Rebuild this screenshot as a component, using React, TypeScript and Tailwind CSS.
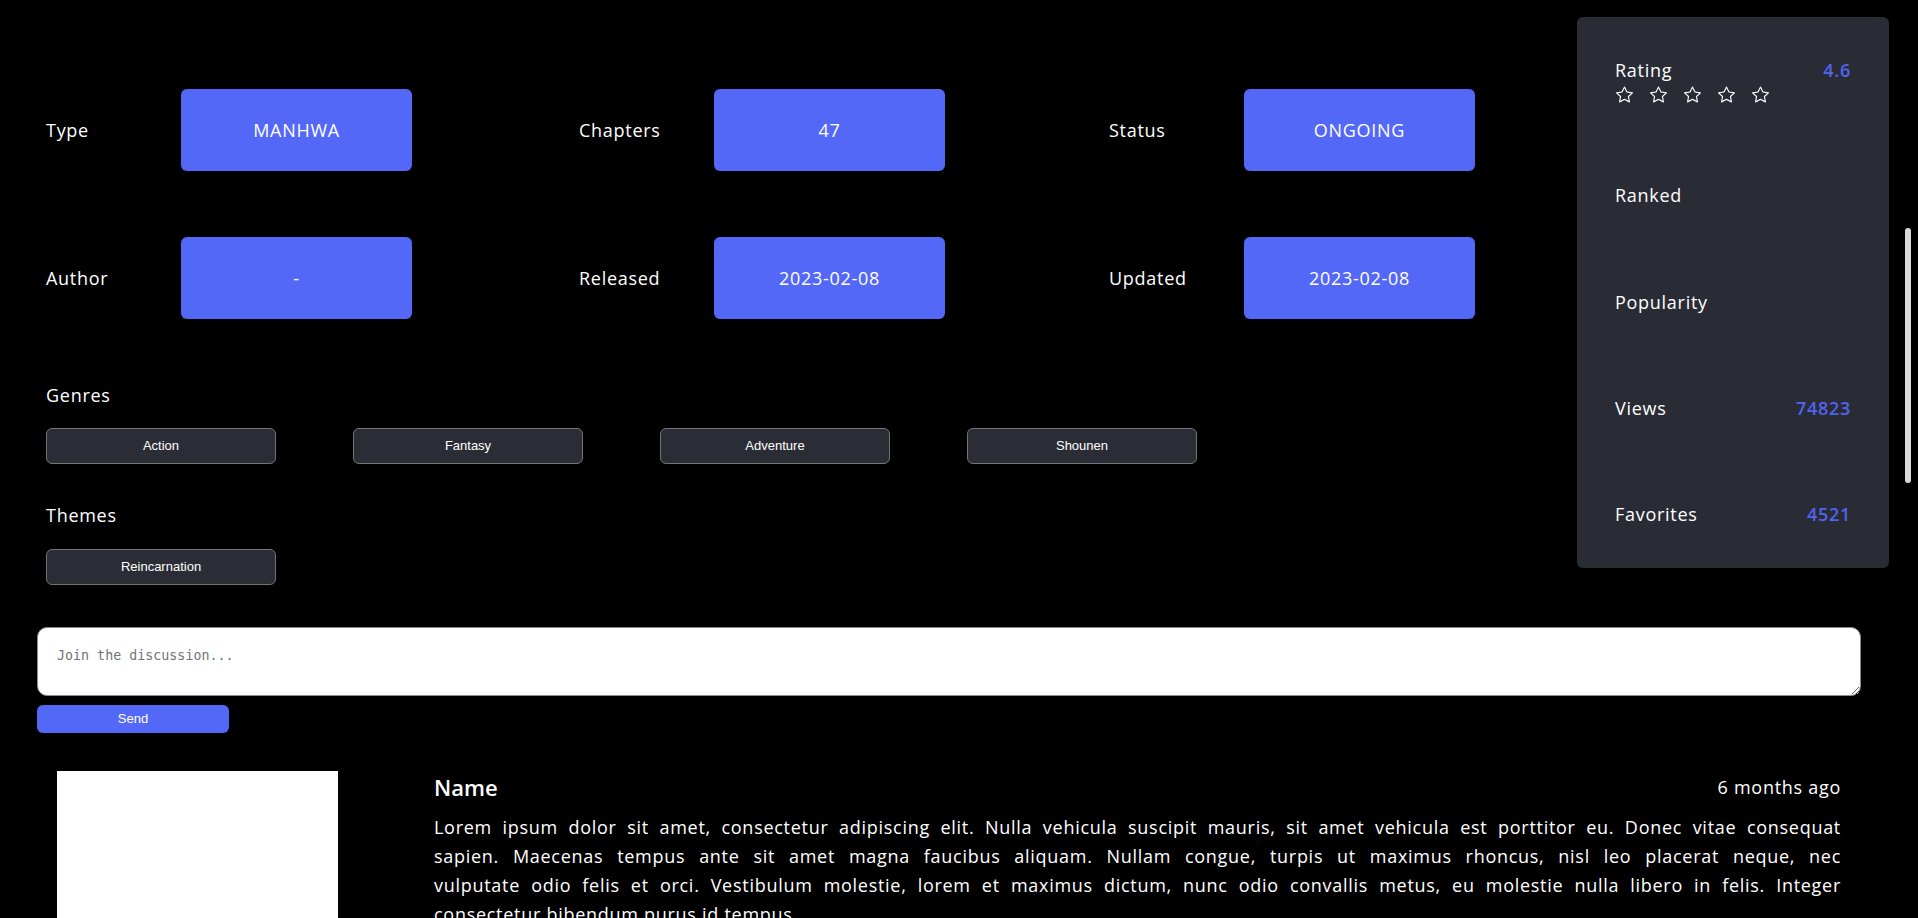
import React from 'react';
import { BsStar } from 'react-icons/bs';

const info = [
  [
    { label: 'Type', value: 'MANHWA' },
    { label: 'Chapters', value: '47' },
    { label: 'Status', value: 'ONGOING' },
  ],
  [
    { label: 'Author', value: '-' },
    { label: 'Released', value: '2023-02-08' },
    { label: 'Updated', value: '2023-02-08' },
  ],
];

const genres = ['Action', 'Fantasy', 'Adventure', 'Shounen'];
const themes = ['Reincarnation'];

// broken into the lines the comment wraps at
const loremLines = [
  'Lorem ipsum dolor sit amet, consectetur adipiscing elit. Nulla vehicula suscipit mauris, sit amet vehicula est porttitor eu. Donec vitae consequat',
  'sapien. Maecenas tempus ante sit amet magna faucibus aliquam. Nullam congue, turpis ut maximus rhoncus, nisl leo placerat neque, nec',
  'vulputate odio felis et orci. Vestibulum molestie, lorem et maximus dictum, nunc odio convallis metus, eu molestie nulla libero in felis. Integer',
  'consectetur bibendum purus id tempus.',
];

const Tag = ({ name }: { name: string }) => (
  <button className="w-[230px] h-[36px] rounded-md bg-[#2b2d36] border border-[#747474] text-[13px] tracking-normal text-white font-['Liberation_Sans',Arial,sans-serif]">
    {name}
  </button>
);

const StatRow = ({ label, value }: { label: string; value?: string }) => (
  <div className="flex items-center justify-between h-[27px]">
    <span>{label}</span>
    {value && <span className="text-[#5064f0] font-semibold">{value}</span>}
  </div>
);

const App = () => {
  return (
    <div className="min-h-screen bg-black text-white font-['Open_Sans','Noto_Sans',sans-serif] text-[18px] tracking-[0.04em] overflow-hidden">
      <div className="flex">
        {/* details */}
        <div className="flex-1 pl-[46px] pt-[89px]">
          <div className="flex flex-col gap-[66px]">
            {info.map((row, i) => (
              <div key={i} className="grid grid-cols-[533px_530px_auto]">
                {row.map((item) => (
                  <div key={item.label} className="flex items-center">
                    <span className="w-[135px]">{item.label}</span>
                    <div className="w-[231px] h-[82px] rounded-md bg-[#5468f7] flex items-center justify-center">
                      {item.value}
                    </div>
                  </div>
                ))}
              </div>
            ))}
          </div>

          <div className="mt-[63px] leading-[27px]">Genres</div>
          <div className="mt-[19px] flex gap-[77px]">
            {genres.map((g) => (
              <Tag key={g} name={g} />
            ))}
          </div>

          <div className="mt-[38px] leading-[27px]">Themes</div>
          <div className="mt-[20px] flex gap-[77px]">
            {themes.map((t) => (
              <Tag key={t} name={t} />
            ))}
          </div>
        </div>

        {/* stats panel */}
        <div className="w-[312px] h-[551px] mt-[17px] mr-[29px] rounded-md bg-[#2a2c35] px-[38px] py-10 flex flex-col justify-between">
          <div>
            <StatRow label="Rating" value="4.6" />
            <div className="flex gap-[17px] mt-[2px] pl-[1px]">
              {[0, 1, 2, 3, 4].map((s) => (
                <BsStar key={s} className="w-[17px] h-[17px] text-white" />
              ))}
            </div>
          </div>
          <StatRow label="Ranked" />
          <StatRow label="Popularity" />
          <StatRow label="Views" value="74823" />
          <StatRow label="Favorites" value="4521" />
        </div>
      </div>

      {/* discussion */}
      <div className="pl-[37px] pr-[57px] mt-[42px]">
        <textarea
          placeholder="Join the discussion..."
          className="block w-full h-[69px] rounded-[10px] bg-white border border-[#8a8a8a] px-[19px] py-[18px] text-[13.33px] tracking-normal text-black font-['DejaVu_Sans_Mono',monospace] placeholder:text-[#757575] outline-none"
        />
        <button className="mt-[9px] w-[192px] h-[28px] rounded-md bg-[#5468f7] text-white text-[13px] tracking-normal font-['Liberation_Sans',Arial,sans-serif]">
          Send
        </button>

        <div className="mt-[38px] flex px-5 gap-[96px]">
          <div className="w-[281px] h-[300px] bg-white shrink-0" />
          <div className="flex-1">
            <div className="flex items-center justify-between h-[32px]">
              <span className="text-[22px] font-semibold tracking-normal">Name</span>
              <span>6 months ago</span>
            </div>
            <p className="mt-[10px] leading-[29px]">
              {loremLines.map((line, i) => (
                <span
                  key={i}
                  className={
                    i < loremLines.length - 1
                      ? 'block whitespace-nowrap text-justify [text-align-last:justify]'
                      : 'block'
                  }
                >
                  {line}
                </span>
              ))}
            </p>
          </div>
        </div>
      </div>

      {/* scrollbar thumb */}
      <div className="fixed right-[7px] top-[228px] w-[6px] h-[255px] rounded-full bg-[#d6dadd]" />
    </div>
  );
};

export default App;
